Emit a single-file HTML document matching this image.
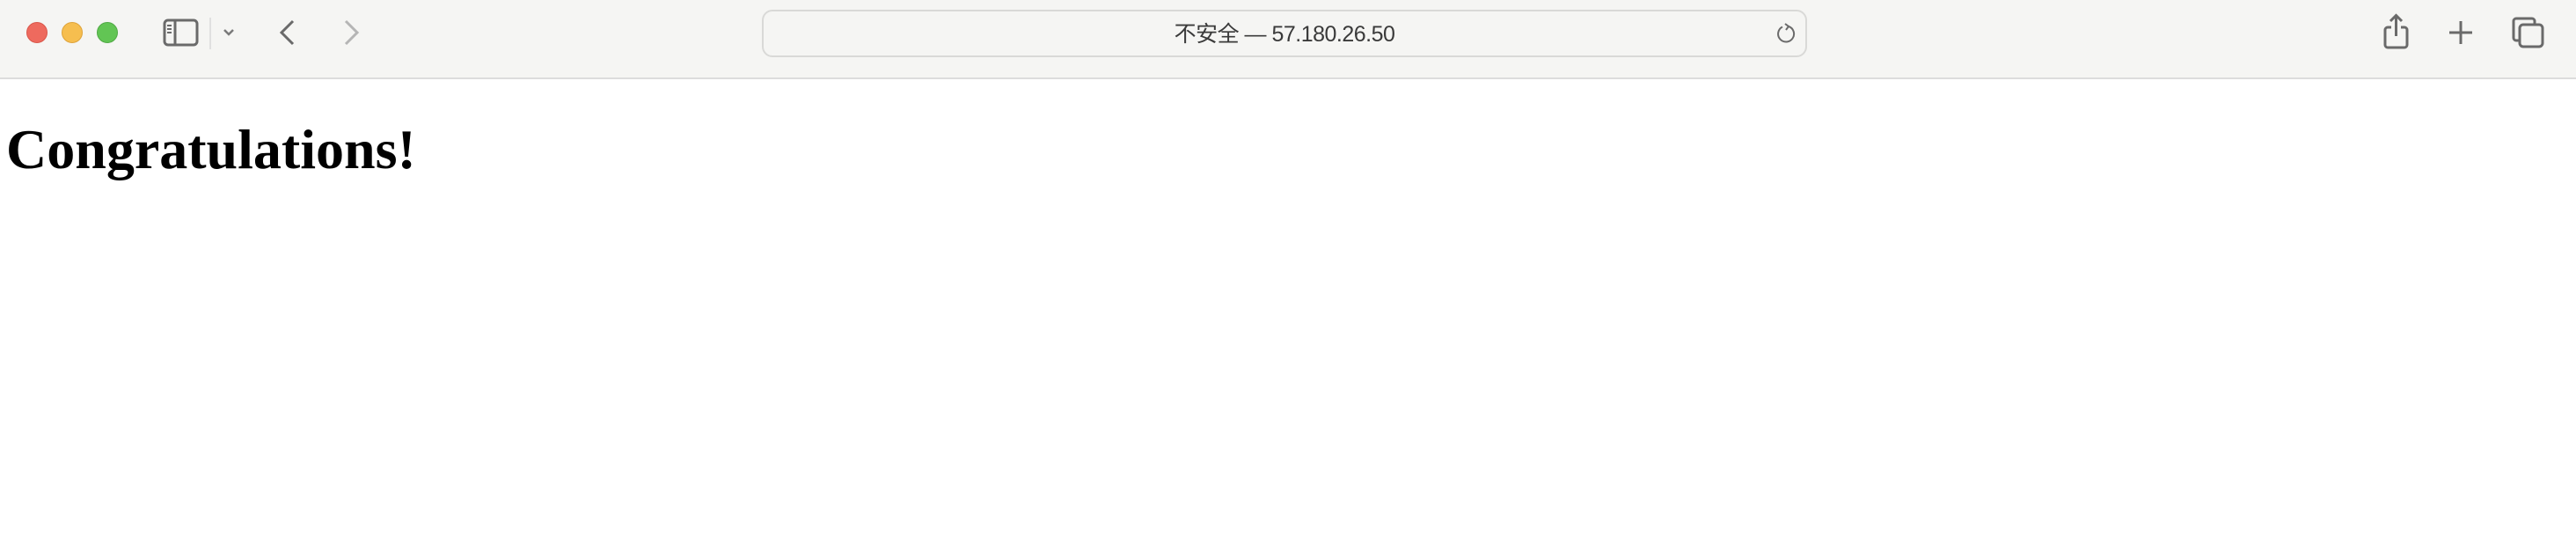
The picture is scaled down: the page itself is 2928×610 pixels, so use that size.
<!DOCTYPE html>
<html><head><meta charset="utf-8"><style>
*{margin:0;padding:0;box-sizing:border-box}
html,body{width:2928px;height:610px;overflow:hidden;background:#fff}
.bar{position:absolute;left:0;top:0;width:2928px;height:90px;background:#f5f5f3;border-bottom:2px solid #dcdcdc}
.dot{position:absolute;top:25px;width:24px;height:24px;border-radius:50%}
.addr{position:absolute;left:866px;top:11px;width:1188px;height:54px;border:2px solid #d9d9d7;border-radius:12px;background:#f5f5f3}
.addr span{position:absolute;left:0;right:0;top:6px;text-align:center;font:25px "Liberation Sans","Noto Sans CJK SC",sans-serif;color:#3a3a3a;letter-spacing:-0.5px}
h1{position:absolute;left:7px;top:133px;font:bold 64px/73.6px "Liberation Serif",serif;color:#000}
svg{position:absolute}
</style></head><body>
<div class="bar">
<div class="dot" style="left:30px;background:#ee6a5e;border:1px solid #d9574b"></div>
<div class="dot" style="left:70px;background:#f6be4f;border:1px solid #dea33a"></div>
<div class="dot" style="left:110px;background:#62c554;border:1px solid #50a945"></div>
<svg style="left:184px;top:20px" width="44" height="34" viewBox="0 0 44 34" fill="none" stroke="#6a6a6a" stroke-width="3"><rect x="3" y="3" width="37" height="28" rx="4"/><line x1="15" y1="3" x2="15" y2="31"/><path d="M6 9h5M6 13h5M6 17h5" stroke-width="2"/></svg>
<div style="position:absolute;left:238px;top:20px;width:2px;height:36px;background:#e0e0e0"></div>
<svg style="left:252px;top:31px" width="16" height="12" viewBox="0 0 16 12" fill="none" stroke="#7a7a7a" stroke-width="2.5"><path d="M3 3l5 5 5-5"/></svg>
<svg style="left:314px;top:21px" width="24" height="32" viewBox="0 0 24 32" fill="none" stroke="#6a6a6a" stroke-width="3"><path d="M19 3L6 16l13 13"/></svg>
<svg style="left:388px;top:21px" width="24" height="32" viewBox="0 0 24 32" fill="none" stroke="#b5b5b5" stroke-width="3"><path d="M5 3l13 13L5 29"/></svg>
<div class="addr"><span>不安全 — 57.180.26.50</span>
<svg style="left:1150px;top:12px" width="24" height="28" viewBox="0 0 24 28" fill="none" stroke="#6a6a6a" stroke-width="2"><path d="M15 5A9 9 0 1 1 8 5.5"/><path d="M11 2l4 3-3 4"/></svg></div>
<svg style="left:2706px;top:15px" width="36" height="42" viewBox="0 0 36 42" fill="none" stroke="#6a6a6a" stroke-width="3"><path d="M12 16H8a3 3 0 0 0-3 3v17a3 3 0 0 0 3 3h19a3 3 0 0 0 3-3V19a3 3 0 0 0-3-3h-4"/><path d="M17.5 26V3M11 9l6.5-6.5L24 9"/></svg>
<svg style="left:2782px;top:22px" width="30" height="30" viewBox="0 0 30 30" fill="none" stroke="#6a6a6a" stroke-width="3"><path d="M15 2v26M2 15h26"/></svg>
<svg style="left:2854px;top:18px" width="40" height="38" viewBox="0 0 40 38" fill="none" stroke="#6a6a6a" stroke-width="3"><path d="M9 28H6a3 3 0 0 1-3-3V6a3 3 0 0 1 3-3h18a3 3 0 0 1 3 3v3"/><rect x="10" y="10" width="26" height="25" rx="4"/></svg>
</div>
<h1>Congratulations!</h1>
</body></html>
